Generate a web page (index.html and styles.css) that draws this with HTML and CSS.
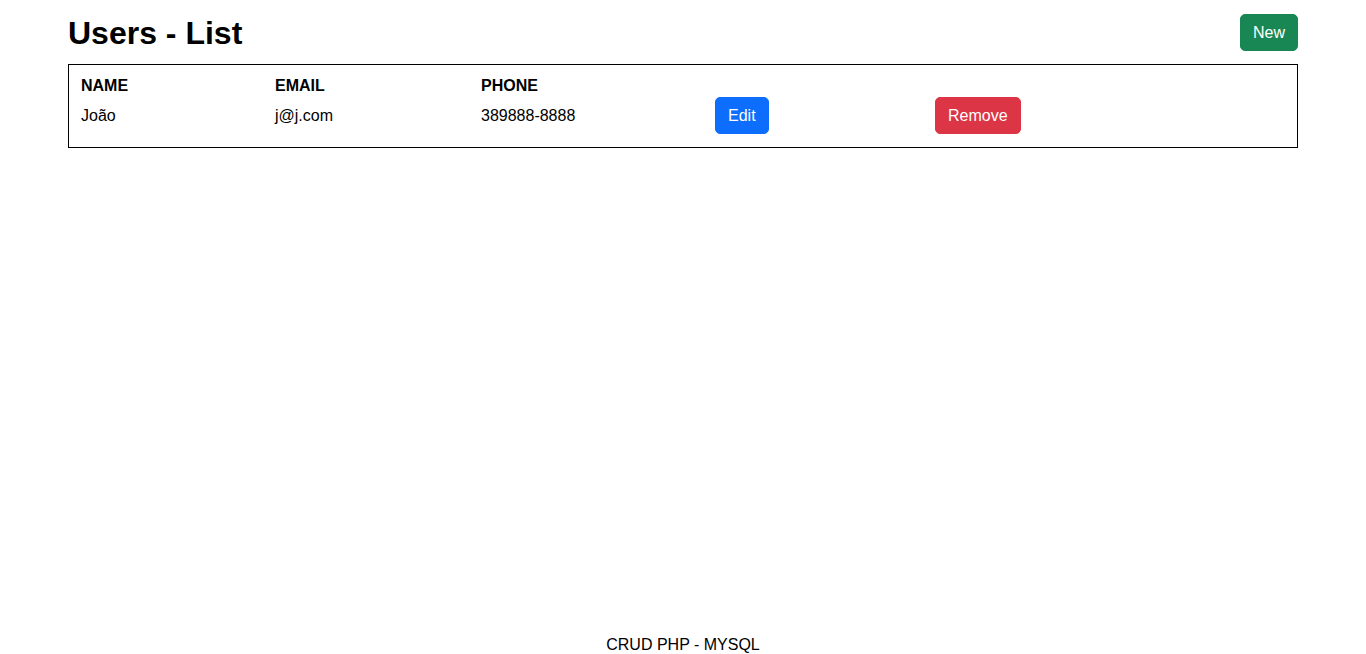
FILE: index.html
```html
<!DOCTYPE html>
<html lang="pt">
<head>
<meta charset="utf-8">
<title>Users - List</title>
<link rel="stylesheet" href="styles.css">
</head>
<body>
<main class="page">
  <header class="top">
    <h1 class="title">Users - List</h1>
    <a class="btn btn-green" href="#">New</a>
  </header>
  <section class="table">
    <div class="row head">
      <div class="cell">NAME</div>
      <div class="cell">EMAIL</div>
      <div class="cell">PHONE</div>
      <div class="cell"></div>
      <div class="cell"></div>
    </div>
    <div class="row">
      <div class="cell">João</div>
      <div class="cell">j@j.com</div>
      <div class="cell">389888-8888</div>
      <div class="cell"><a class="btn btn-blue" href="#">Edit</a></div>
      <div class="cell"><a class="btn btn-red" href="#">Remove</a></div>
    </div>
  </section>
</main>
<footer class="footer">CRUD PHP - MYSQL</footer>
</body>
</html>
```
FILE: styles.css
```css
* { box-sizing: border-box; }
html, body { height: 100%; }
body {
  margin: 0;
  font-family: "Liberation Sans", Arial, sans-serif;
  font-size: 16px;
  color: #000;
  background: #fff;
  display: flex;
  flex-direction: column;
  min-height: 100vh;
}
.page {
  width: 1230px;
  margin: 0 auto;
}
.top {
  display: flex;
  justify-content: space-between;
  align-items: center;
  padding-top: 14px;
}
.title {
  margin: 0;
  font-size: 32px;
  font-weight: bold;
  line-height: 37px;
  position: relative;
  top: 1px;
}
.btn {
  display: inline-block;
  padding: 6px 12px;
  font-size: 16px;
  line-height: 23px;
  color: #fff;
  text-decoration: none;
  border: 1px solid transparent;
  border-radius: 5px;
}
.btn-green { background: #198754; border-color: #198754; }
.btn-blue { background: #0d6efd; border-color: #0d6efd; }
.btn-red { background: #dc3545; border-color: #dc3545; }
.table {
  margin-top: 13px;
  border: 1px solid #000;
  padding: 9px 12px 13px;
}
.row {
  display: grid;
  grid-template-columns: 194px 206px 234px 220px 1fr;
  align-items: center;
}
.head {
  height: 23px;
  font-weight: bold;
}
.row .cell { line-height: 18px; }
.footer {
  margin-top: auto;
  text-align: center;
  line-height: 18px;
  padding-top: 2px;
}
```
